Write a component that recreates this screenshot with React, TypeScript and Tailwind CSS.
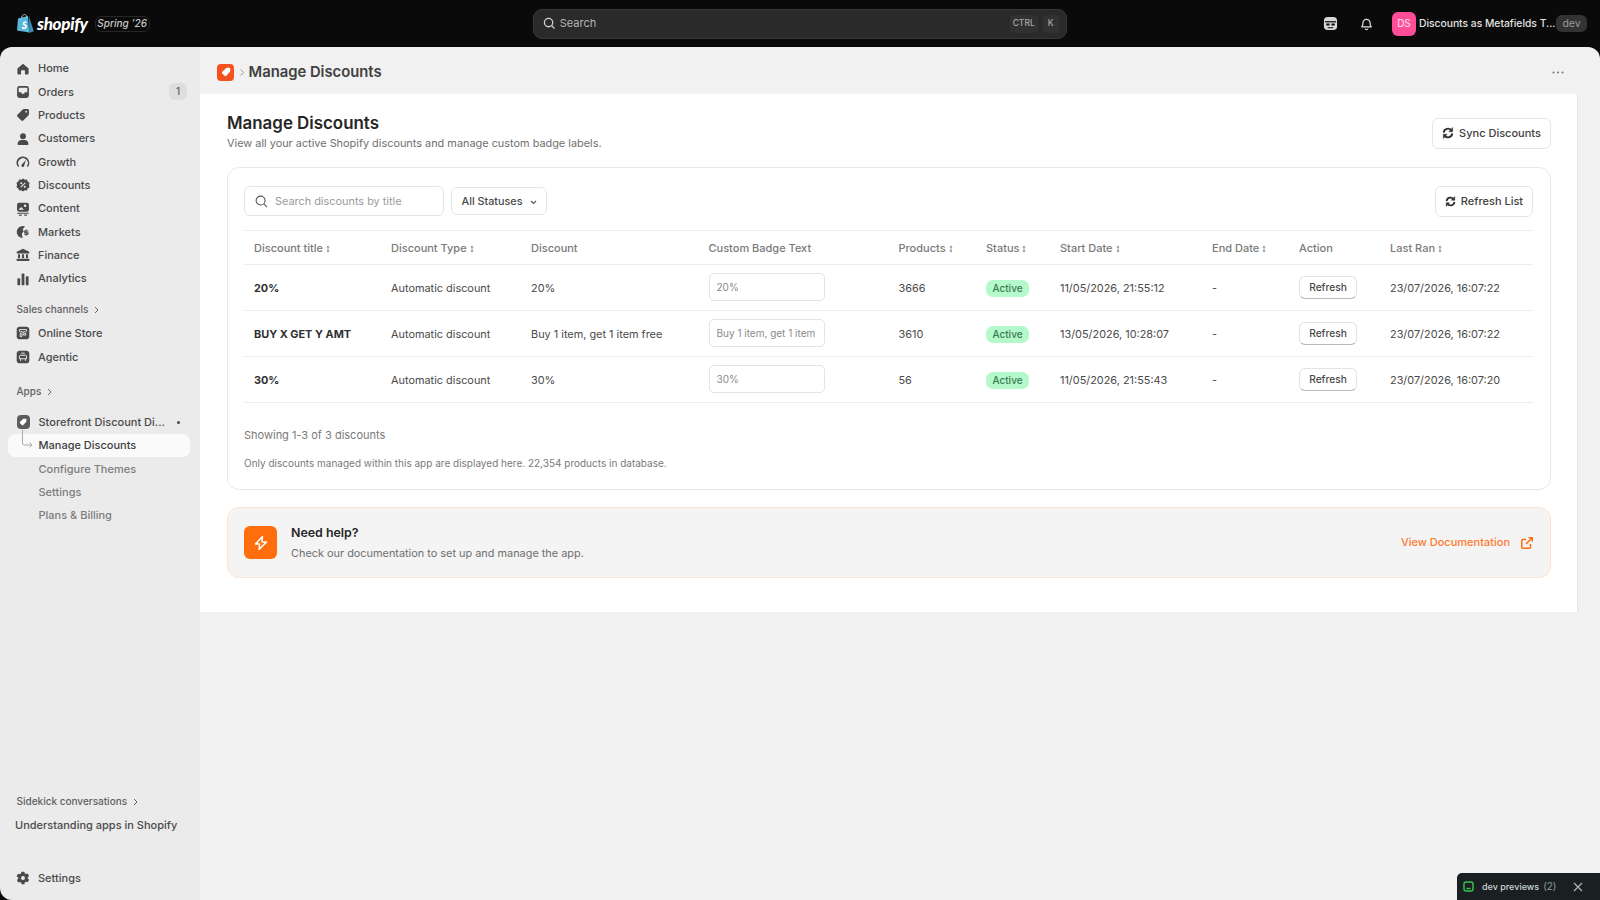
import React from "react";

const D = "#4a4a4a";

function Ico({ children, size = 14 }: { children: React.ReactNode; size?: number }) {
  return (
    <svg width={size} height={size} viewBox="0 0 20 20" fill={D} className="shrink-0">
      {children}
    </svg>
  );
}

const icons: Record<string, React.ReactNode> = {
  home: <path d="M10 2.5 18 9.3V16a2 2 0 0 1-2 2h-3.2v-5.2a1 1 0 0 0-1-1H8.2a1 1 0 0 0-1 1V18H4a2 2 0 0 1-2-2V9.3Z" />,
  orders: <path fillRule="evenodd" d="M5 1.500h10A3.500 3.500 0 0 1 18.500 5v10a3.500 3.500 0 0 1-3.500 3.500H5A3.500 3.500 0 0 1 1.500 15V5A3.500 3.500 0 0 1 5 1.500Zm0 2.300a1.200 1.200 0 0 0-1.200 1.200v5.500h3.700a2.500 2.500 0 0 0 5 0h3.700V5A1.200 1.200 0 0 0 15 3.800Z" />,
  products: <path fillRule="evenodd" d="M11 1.500h5.500a2 2 0 0 1 2 2V9a2 2 0 0 1-.6 1.400l-7.500 7.500a2 2 0 0 1-2.800 0l-5.500-5.500a2 2 0 0 1 0-2.800l7.500-7.500A2 2 0 0 1 11 1.500Zm3.500 2.500a1.300 1.300 0 1 0 0 2.600 1.300 1.300 0 0 0 0-2.600Z" />,
  customers: (
    <>
      <circle cx="10" cy="6" r="4.200" />
      <path d="M2.500 18.500v-2.300c0-2.700 2.300-4.700 5-4.700h5c2.700 0 5 2 5 4.700v2.300Z" />
    </>
  ),
  growth: (
    <>
      <path d="M10 2a9 9 0 0 1 9 9c0 2.300-.7 4.400-2 6l-1.700-1.300A6.800 6.800 0 1 0 4.700 15.700L3 17A9 9 0 0 1 10 2Z" />
      <path d="m14 7-2.300 8.300a2 2 0 1 1-3.400-1.800Z" />
    </>
  ),
  discounts: (
    <>
      <path d="M10 .8 12.500 2.500 15.500 2.200 16.700 5 19.300 6.700 18.500 10 19.300 13.300 16.700 15 15.500 17.800 12.500 17.500 10 19.200 7.500 17.500 4.500 17.800 3.300 15 .7 13.300 1.500 10 .7 6.700 3.300 5 4.500 2.200 7.500 2.500Z" />
      <circle cx="7.500" cy="7.500" r="1.400" fill="#ebebeb" />
      <circle cx="12.500" cy="12.500" r="1.400" fill="#ebebeb" />
      <path d="m6.800 13.200 6.400-6.400" stroke="#ebebeb" strokeWidth="1.500" />
    </>
  ),
  content: (
    <>
      <path fillRule="evenodd" d="M4.500 1h11A3 3 0 0 1 18.500 4v7a3 3 0 0 1-3 3h-11a3 3 0 0 1-3-3V4a3 3 0 0 1 3-3Zm8.500 2.500a1.800 1.800 0 1 0 0 3.600 1.800 1.800 0 0 0 0-3.600ZM3.500 11l4-4 3.800 4Z" />
      <rect x="1.500" y="15.300" width="17" height="1.500" rx=".7" />
      <rect x="4" y="18" width="4.500" height="1.500" rx=".7" />
      <rect x="11.500" y="18" width="4.500" height="1.500" rx=".7" />
    </>
  ),
  markets: (
    <>
      <path d="M9.500 1.500a8.500 8.500 0 0 1 3.500.7L9.500 6 11 9 8.300 12.500l1.200 6A8.500 8.500 0 1 1 9.500 1.500Z" />
      <path d="M15.500 6.500v1.200h2.300v1.600h-3v.9h3v3.600h-2.300v1.400h-1.600v-1.400h-2.200v-1.600h3v-.9h-3V7.700h2.200V6.500Z" />
    </>
  ),
  finance: (
    <>
      <path d="M10 1 19 5.500V8H1V5.500Z" />
      <rect x="2.800" y="9" width="3" height="5.500" />
      <rect x="8.500" y="9" width="3" height="5.500" />
      <rect x="14.200" y="9" width="3" height="5.500" />
      <rect x="1" y="15.500" width="18" height="3" rx=".5" />
    </>
  ),
  analytics: (
    <>
      <rect x="2" y="9" width="4" height="10" rx="1.300" />
      <rect x="8" y="2" width="4" height="17" rx="1.300" />
      <rect x="14" y="6" width="4" height="13" rx="1.300" />
    </>
  ),
  settings: (
    <path fillRule="evenodd" d="M8 1h4l.7 2.500 1.500.9 2.500-.7 2 3.500-1.900 1.800v1.700l1.900 1.800-2 3.500-2.500-.7-1.500.9L12 19H8l-.7-2.500-1.500-.9-2.500.7-2-3.500 1.900-1.800V9.300L.8 7.500l2-3.500 2.500.7 1.500-.9ZM10 7.200a2.800 2.800 0 1 0 0 5.600 2.800 2.800 0 0 0 0-5.600Z" />
  ),
  store: (
    <>
      <rect x="1" y="1" width="18" height="18" rx="4.500" />
      <path d="M5 5h10v2.500a1.700 1.700 0 0 1-3.300 0 1.700 1.700 0 0 1-3.400 0 1.700 1.700 0 0 1-3.300 0ZM6 11h2.500v4H6Zm4.500 0H14v2h-3.500Z" fill="none" stroke="#ebebeb" strokeWidth="1.300" />
    </>
  ),
  agentic: (
    <>
      <rect x="1" y="1" width="18" height="18" rx="4.500" />
      <path d="M6.500 7.500h7a1.500 1.500 0 0 1 1.500 1.500v3.500H5V9a1.500 1.500 0 0 1 1.500-1.500ZM7.500 4.500h5M6.500 12.500V15.500M13.500 12.500V15.500" fill="none" stroke="#ebebeb" strokeWidth="1.400" />
    </>
  ),
};

function Item({ icon, label, badge }: { icon: string; label: string; badge?: string }) {
  return (
    <div className="flex h-[23.33px] items-center pl-[16px] pr-[13px]">
      <Ico size={14}>{icons[icon]}</Ico>
      <span className="ml-[8px] text-[11px] font-medium text-[#4a4a4a]">{label}</span>
      {badge && (
        <span className="ml-auto flex h-[17px] w-[18px] items-center justify-center rounded-[6px] bg-[#dedede] text-[10px] font-medium text-[#616161]">
          {badge}
        </span>
      )}
    </div>
  );
}

function Heading({ label }: { label: string }) {
  return (
    <div className="flex items-center gap-[6px] pl-[16.500px] text-[10px] font-medium text-[#616161]">
      <span>{label}</span>
      <svg width="5" height="8" viewBox="0 0 5 8" fill="none" stroke="#616161" strokeWidth="1">
        <path d="m1 1 3 3-3 3" />
      </svg>
    </div>
  );
}

function SubItem({ label, active }: { label: string; active?: boolean }) {
  return (
    <div
      className={`ml-[8px] mr-[10px] flex h-[23.33px] items-center rounded-[7px] pl-[30.500px] text-[11px] font-medium ${
        active ? "bg-[#fafafa] text-[#404040]" : "text-[#7d7d7d]"
      }`}
    >
      {label}
    </div>
  );
}

function TagGlyph({ size = 10 }: { size?: number }) {
  return (
    <svg width={size} height={size} viewBox="0 0 12 12" fill="#fff">
      <path d="M6.500 1H10a1 1 0 0 1 1 1v3.500L6 10.700a1 1 0 0 1-1.400 0L1.300 7.400a1 1 0 0 1 0-1.400Z" />
    </svg>
  );
}

function Sidebar() {
  return (
    <aside className="flex w-[200px] shrink-0 flex-col bg-[#ebebeb] pt-[10px]">
      <Item icon="home" label="Home" />
      <Item icon="orders" label="Orders" badge="1" />
      <Item icon="products" label="Products" />
      <Item icon="customers" label="Customers" />
      <Item icon="growth" label="Growth" />
      <Item icon="discounts" label="Discounts" />
      <Item icon="content" label="Content" />
      <Item icon="markets" label="Markets" />
      <Item icon="finance" label="Finance" />
      <Item icon="analytics" label="Analytics" />
      <div className="mt-[12px] mb-[4.500px]">
        <Heading label="Sales channels" />
      </div>
      <Item icon="store" label="Online Store" />
      <Item icon="agentic" label="Agentic" />
      <div className="mt-[16px] mb-[11px]">
        <Heading label="Apps" />
      </div>
      <div className="relative">
        <div className="flex h-[23.33px] items-center pl-[16.500px]">
          <span className="flex h-[13.500px] w-[13.500px] items-center justify-center rounded-[4px] bg-[#5c5c5c]">
            <TagGlyph size={8} />
          </span>
          <span className="ml-[8.500px] text-[11px] font-medium text-[#4a4a4a]">Storefront Discount Di...</span>
          <span className="ml-[12px] h-[3px] w-[3px] rounded-full bg-[#4a4a4a]" />
        </div>
        <SubItem label="Manage Discounts" active />
        <svg className="absolute left-[21px] top-[20px]" width="12" height="20" viewBox="0 0 12 20" fill="none" stroke="#a8a8a8" strokeWidth="1">
          <path d="M1.500 0v13a2 2 0 0 0 2 2h7.500M8.500 12.500 11 15l-2.500 2.500" />
        </svg>
        <SubItem label="Configure Themes" />
        <SubItem label="Settings" />
        <SubItem label="Plans & Billing" />
      </div>
      <div className="mt-auto">
        <Heading label="Sidekick conversations" />
        <div className="mt-[8px] pl-[15px] text-[11px] font-medium text-[#4a4a4a]">Understanding apps in Shopify</div>
        <div className="mb-[10px] mt-[33px]">
          <Item icon="settings" label="Settings" />
        </div>
      </div>
    </aside>
  );
}

function TopBar() {
  return (
    <header className="flex h-[47px] shrink-0 items-center bg-[#0a0a0a] pl-[17px] pr-[13px]">
      <svg width="17" height="20" viewBox="0 0 17 20" className="shrink-0">
        <path d="M1 4.500 11 2l1.200 16.500L0 16.500Z" fill="#5bb6dc" />
        <path d="M12 2.500 16.800 17.300 12.200 19Z" fill="#3b8dad" />
        <path d="M4.500 5c0-3 1.500-4.500 3-4.500S10 2 10 4" fill="none" stroke="#9dc8d8" strokeWidth="1" />
        <path d="M9.300 7.500C7.500 7 5.700 8 5.800 9.700c.1 1.800 2.700 1.700 2.600 3-.1 1-1.700.9-3 .1l-.5 1.600c1.800 1 4.900.8 5.100-1.900.1-2.100-2.600-2.200-2.500-3.200 0-.7 1.100-.7 2-.3Z" fill="#fff" />
      </svg>
      <span className="ml-[3px] font-['Lato'] text-[17px] font-black italic tracking-[-0.3px] text-white">shopify</span>
      <span className="ml-[7px] flex h-[16px] w-[55px] items-center justify-center rounded-[6px] border border-[#262626] text-[10px] font-medium italic text-[#c9c9c9]">
        Spring ’26
      </span>
      <div className="ml-[383px] flex h-[30px] w-[534px] shrink-0 items-center rounded-[9px] border border-[#383838] bg-[#2a2a2a] pl-[9px] pr-[7px]">
        <svg width="13" height="13" viewBox="0 0 14 14" fill="none" stroke="#d0d0d0" strokeWidth="1.400">
          <circle cx="6" cy="6" r="4.500" />
          <path d="m9.500 9.500 3 3" />
        </svg>
        <span className="ml-[4px] text-[11px] text-[#b5b5b5]">Search</span>
        <span className="ml-auto flex h-[18px] w-[28px] items-center justify-center rounded-[4px] bg-[#313131] text-[8.500px] font-medium text-[#a8a8a8]">
          CTRL
        </span>
        <span className="ml-[5px] flex h-[18px] w-[16px] items-center justify-center rounded-[4px] bg-[#313131] text-[8.500px] font-medium text-[#a8a8a8]">
          K
        </span>
      </div>
      <div className="ml-auto flex items-center">
        <svg width="15" height="15" viewBox="0 0 16 16" className="shrink-0">
          <rect x="1" y="1" width="14" height="14" rx="4" fill="#d8d8d8" />
          <path d="M2 5.500h12v1.300H2Z" fill="#0a0a0a" />
          <path d="M3.500 8h3.500v2H3.500Zm5.500 0h3.500v2H9ZM5 12h6v1H5Z" fill="#0a0a0a" />
        </svg>
        <svg className="ml-[21px] shrink-0" width="15" height="15" viewBox="0 0 16 16" fill="none" stroke="#e3e3e3" strokeWidth="1.300">
          <path d="M3 11.500c1-1 1.200-2 1.200-4a3.800 3.800 0 0 1 7.600 0c0 2 .2 3 1.200 4Z" strokeLinejoin="round" />
          <path d="M6.500 13.500a1.600 1.600 0 0 0 3 0" />
        </svg>
        <span className="ml-[18px] flex h-[24px] w-[24px] items-center justify-center rounded-[6px] bg-[#ff4d97] text-[10px] font-medium text-[#ffd6e6]">
          DS
        </span>
        <span className="ml-[3px] w-[134px] text-[10.300px] font-medium whitespace-nowrap text-[#e3e3e3]">
          Discounts as Metafields T...
        </span>
        <span className="ml-[3px] flex h-[17px] w-[31px] items-center justify-center rounded-[6px] bg-[#333333] text-[10.500px] text-[#9a9a9a]">
          dev
        </span>
      </div>
    </header>
  );
}

function Sort() {
  return (
    <svg className="ml-[3px] inline-block" width="4" height="8" viewBox="0 0 5 9" fill="#8a8a8a">
      <path d="M2.500 0 4.500 2.500H3V6.500h1.500L2.500 9 .5 6.500H2V2.500H.5Z" />
    </svg>
  );
}

function SyncIcon({ size = 12 }: { size?: number }) {
  return (
    <svg width={size} height={size} viewBox="0 0 14 14" fill="none" stroke="#303030" strokeWidth="2.200" className="shrink-0">
      <path d="M2 6.500A5 5 0 0 1 11 4" />
      <path d="M12 7.500A5 5 0 0 1 3 10" />
      <path d="M12.500 .5v5H8Z" fill="#303030" strokeWidth="0.500" />
      <path d="M1.500 13.500v-5H6Z" fill="#303030" strokeWidth="0.500" />
    </svg>
  );
}

type Row = { title: string; disc: string; badge: string; products: string; start: string; ran: string };
const rows: Row[] = [
  { title: "20%", disc: "20%", badge: "20%", products: "3666", start: "11/05/2026, 21:55:12", ran: "23/07/2026, 16:07:22" },
  { title: "BUY X GET Y AMT", disc: "Buy 1 item, get 1 item free", badge: "Buy 1 item, get 1 item free", products: "3610", start: "13/05/2026, 10:28:07", ran: "23/07/2026, 16:07:22" },
  { title: "30%", disc: "30%", badge: "30%", products: "56", start: "11/05/2026, 21:55:43", ran: "23/07/2026, 16:07:20" },
];

function Th({ children, sort }: { children: React.ReactNode; sort?: boolean }) {
  return (
    <th className="p-0 pt-[1px] pl-[10px] text-left text-[11px] font-medium whitespace-nowrap text-[#7a7a7a]">
      {children}
      {sort && <Sort />}
    </th>
  );
}

function Td({ children, bold }: { children: React.ReactNode; bold?: boolean }) {
  return (
    <td className={`p-0 pt-[1px] pl-[10px] text-[10.900px] whitespace-nowrap ${bold ? "font-bold text-[#303030]" : "text-[#4a4a4a]"}`}>
      {children}
    </td>
  );
}

function DiscountTable() {
  return (
    <table className="mt-[13px] w-full table-fixed border-collapse">
      <colgroup>
        <col className="w-[137px]" />
        <col className="w-[140px]" />
        <col className="w-[177.500px]" />
        <col className="w-[190px]" />
        <col className="w-[87.500px]" />
        <col className="w-[74px]" />
        <col className="w-[152px]" />
        <col className="w-[87px]" />
        <col className="w-[91px]" />
        <col />
      </colgroup>
      <thead>
        <tr className="h-[34px] border-y border-[#ececec]">
          <Th sort>Discount title</Th>
          <Th sort>Discount Type</Th>
          <Th>Discount</Th>
          <Th>Custom Badge Text</Th>
          <Th sort>Products</Th>
          <Th sort>Status</Th>
          <Th sort>Start Date</Th>
          <Th sort>End Date</Th>
          <Th>Action</Th>
          <Th sort>Last Ran</Th>
        </tr>
      </thead>
      <tbody>
        {rows.map((r) => (
          <tr key={r.start} className="h-[46px] border-b border-[#ececec]">
            <Td bold>{r.title}</Td>
            <Td>Automatic discount</Td>
            <Td>{r.disc}</Td>
            <Td>
              <input
                readOnly
                value={r.badge}
                className="mb-[2px] block h-[28px] w-[116px] rounded-[5px] border border-[#e3e3e3] px-[7px] text-[10px] text-[#8a8a8a] outline-none"
              />
            </Td>
            <Td>{r.products}</Td>
            <Td>
              <span className="flex h-[17px] w-[43px] items-center justify-center rounded-[7px] bg-[#b4f9c9] text-[10px] font-medium text-[#3d7a56]">
                Active
              </span>
            </Td>
            <Td>{r.start}</Td>
            <Td>-</Td>
            <Td>
              <span className="mb-[1px] flex h-[23px] w-[58px] items-center justify-center rounded-[6px] border border-[#e3e3e3] border-b-[#b8b8b8] bg-white text-[10.200px] font-medium text-[#4a4a4a]">
                Refresh
              </span>
            </Td>
            <Td>{r.ran}</Td>
          </tr>
        ))}
      </tbody>
    </table>
  );
}

function Main() {
  return (
    <main className="flex min-w-0 flex-1 flex-col bg-[#f1f1f1]">
      <div className="flex h-[47px] shrink-0 items-center pt-[3px] pl-[17px] pr-[36px]">
        <span className="flex h-[17px] w-[17px] items-center justify-center rounded-[4px] bg-[#f4511e]">
          <TagGlyph size={10} />
        </span>
        <svg className="ml-[6px]" width="4" height="7" viewBox="0 0 4 7" fill="none" stroke="#8a8a8a" strokeWidth="0.900">
          <path d="m.5.500 3 3-3 3" />
        </svg>
        <h1 className="ml-[4.500px] text-[14.800px] font-semibold text-[#404040]">Manage Discounts</h1>
        <svg className="ml-auto" width="12" height="3" viewBox="0 0 12 3" fill="#707070">
          <circle cx="1.500" cy="1.500" r="1" />
          <circle cx="6" cy="1.500" r="1" />
          <circle cx="10.500" cy="1.500" r="1" />
        </svg>
      </div>
      <div className="mr-[22px] border-r border-[#e6e6e6] bg-white pl-[27px] pr-[26px] pt-[18px] pb-[34px]">
        <div className="flex items-center justify-between">
          <div>
            <h2 className="text-[16.900px] leading-[22px] font-semibold text-[#262626]">Manage Discounts</h2>
            <p className="mt-[1px] text-[10.900px] leading-[16px] text-[#6f6f6f]">
              View all your active Shopify discounts and manage custom badge labels.
            </p>
          </div>
          <button className="mt-[3px] flex h-[31px] w-[119px] items-center justify-center gap-[5px] rounded-[6px] border border-[#e5e5e5] bg-white text-[11px] font-medium text-[#404040]">
            <SyncIcon />
            Sync Discounts
          </button>
        </div>
        <section className="mt-[16px] rounded-[12px] border border-[#e8e8e8] pl-[16px] pr-[17px] pt-[17px] pb-[19px]">
          <div className="flex items-center">
            <div className="flex h-[30px] w-[200px] items-center rounded-[6px] border border-[#e5e5e5] pl-[10px]">
              <svg width="13" height="13" viewBox="0 0 14 14" fill="none" stroke="#5a5a5a" strokeWidth="1.200">
                <circle cx="6" cy="6" r="4.800" />
                <path d="m9.500 9.500 3.500 3.500" />
              </svg>
              <span className="ml-[7px] pt-[1px] text-[10.900px] text-[#9a9a9a]">Search discounts by title</span>
            </div>
            <div className="ml-[7px] flex h-[28px] w-[96px] items-center rounded-[6px] border border-[#e5e5e5] pl-[9.500px] pt-[3px] text-[10.800px] font-medium text-[#4a4a4a]">
              All Statuses
              <svg className="ml-[8px]" width="7" height="5" viewBox="0 0 7 5" fill="none" stroke="#5a5a5a" strokeWidth="1.200">
                <path d="m1 1 2.500 2.500L6 1" />
              </svg>
            </div>
            <button className="mt-[1px] ml-auto flex h-[31px] w-[98px] items-center justify-center gap-[5px] rounded-[6px] border border-[#e5e5e5] bg-white text-[11px] font-medium text-[#404040]">
              <SyncIcon size={11} />
              Refresh List
            </button>
          </div>
          <DiscountTable />
          <p className="mt-[24px] text-[11px] leading-[16px] text-[#7a7a7a]">Showing 1-3 of 3 discounts</p>
          <p className="mt-[13px] text-[10px] leading-[14px] text-[#7a7a7a]">
            Only discounts managed within this app are displayed here. 22,354 products in database.
          </p>
        </section>
        <section className="mt-[17px] flex h-[71px] items-center rounded-[12px] border border-[#fde3cd] bg-[#f4f4f4] pl-[16px] pr-[17px]">
          <span className="flex h-[33px] w-[33px] items-center justify-center rounded-[6px] bg-[#ff6d0d]">
            <svg width="16" height="16" viewBox="0 0 16 16" fill="none" stroke="#fff" strokeWidth="1.500" strokeLinejoin="round">
              <path d="M9.500 1.500 2.500 9h4.200l-.7 5.500L13.500 7H9Z" />
            </svg>
          </span>
          <div className="ml-[14px]">
            <div className="text-[12.400px] leading-[18px] font-semibold text-[#262626]">Need help?</div>
            <div className="mt-[3px] text-[10.900px] leading-[16px] text-[#6f6f6f]">
              Check our documentation to set up and manage the app.
            </div>
          </div>
          <span className="ml-auto pr-[-1px] text-[11px] font-medium text-[#ff7a2f]">View Documentation</span>
          <svg className="ml-[11px]" width="12" height="12" viewBox="0 0 12 12" fill="none" stroke="#ff6d0d" strokeWidth="1.500">
            <path d="M9.500 7v3.200a1 1 0 0 1-1 1H1.800a1 1 0 0 1-1-1V3.500a1 1 0 0 1 1-1H5" />
            <path d="M5 7 11 1M7.500.8H11.200V4.500" />
          </svg>
        </section>
      </div>
    </main>
  );
}

export default function App() {
  return (
    <div className="relative flex h-screen w-full flex-col overflow-hidden bg-[#0a0a0a] font-['Inter',sans-serif]">
      <TopBar />
      <div className="flex min-h-0 flex-1 overflow-hidden rounded-t-[12px] rounded-bl-[12px]">
        <Sidebar />
        <Main />
      </div>
      <div className="absolute right-0 bottom-0 flex h-[27px] w-[143px] items-center rounded-tl-[5px] bg-[#1a2022] pl-[6px]">
        <svg width="11" height="11" viewBox="0 0 11 11" fill="none" stroke="#36c84b" strokeWidth="1.400">
          <rect x="1" y="1" width="9" height="9" rx="2" />
          <path d="M3.500 7.500h4" />
        </svg>
        <span className="ml-[8px] text-[9px] font-medium text-[#c9d4d8]">dev previews</span>
        <span className="ml-[4px] text-[10px] text-[#8d989c]">(2)</span>
        <svg className="ml-[16px]" width="10" height="10" viewBox="0 0 10 10" stroke="#b5bcbf" strokeWidth="1.100">
          <path d="m1 1 8 8M9 1 1 9" />
        </svg>
      </div>
    </div>
  );
}
